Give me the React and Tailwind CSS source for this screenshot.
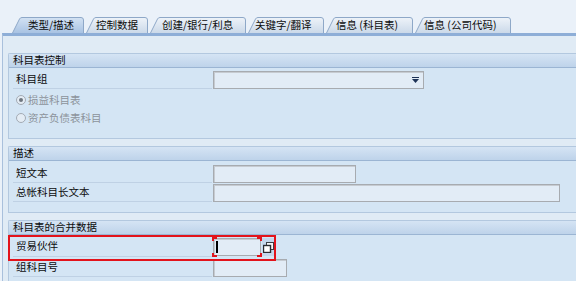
import React from "react";

const tabs = [
  { label: "类型/描述", w: 72, cls: "w-[72px]", pl: "pl-[16px]", active: true },
  { label: "控制数据", w: 62, cls: "w-[62px]", pl: "pl-[10px]" },
  { label: "创建/银行/利息", w: 96, cls: "w-[96px]", pl: "pl-[12px]" },
  { label: "关键字/翻译", w: 76, cls: "w-[76px]", pl: "pl-[7px]" },
  { label: "信息 (科目表)", w: 87, cls: "w-[87px]", pl: "pl-[10px]" },
  { label: "信息 (公司代码)", w: 96, cls: "w-[96px]", pl: "pl-[9px]" },
];

function Tab({ t, i }) {
  const w = t.w;
  const h = 16;
  const d = `M0.5,${h} L7.5,2 Q8.3,0.5 10,0.5 L${w - 3},0.5 Q${w - 0.5},0.5 ${w - 0.5},3 L${w - 0.5},${h}`;
  return (
    <div className={`relative h-[16px] shrink-0 ${t.cls}`}>
      <svg className="absolute inset-0" width={w} height={h}>
        <defs>
          <linearGradient id={`tg${i}`} x1="0" y1="0" x2="0" y2="1">
            {t.active ? (
              <>
                <stop offset="0" stopColor="#d3e2f3" />
                <stop offset="1" stopColor="#a9c3e3" />
              </>
            ) : (
              <>
                <stop offset="0" stopColor="#eef3f9" />
                <stop offset="1" stopColor="#cbd9e9" />
              </>
            )}
          </linearGradient>
        </defs>
        <path d={d} fill={`url(#tg${i})`} stroke="#8ea8c8" strokeWidth="1" />
      </svg>
      <div className={`relative h-full flex items-center pt-[1px] ${t.pl} text-[10.5px] text-[#0c0c0c] whitespace-nowrap`}>
        {t.label}
      </div>
    </div>
  );
}

function Input({ cls }) {
  return (
    <div
      className={`h-[18px] bg-[#e2ecf6] border border-[#a7abb0] shadow-[inset_1px_1px_0_#c6cbd1] ${cls}`}
    />
  );
}

function Row({ label, children, h = "h-[19px]" }) {
  return (
    <div className={`flex items-stretch ${h}`}>
      <div className="w-[199px] ml-[4px] flex items-center border-b border-[#bfd1e4] pl-[3px] text-[10.5px] text-[#0c0c0c] whitespace-nowrap">
        {label}
      </div>
      <div className="ml-[1px] flex items-center">{children}</div>
    </div>
  );
}

function Group({ title, children, bodyCls, className = "" }) {
  return (
    <div className={`relative border-t border-l border-b border-[#b3c8df] rounded-tl-[2px] ${className}`}>
      <div className="h-[14px] bg-linear-to-b from-[#d5e4f4] to-[#bed3ea] border-b border-[#9bb5d3] pl-[4px] flex items-center text-[10.5px] text-[#0c0c0c] whitespace-nowrap">
        {title}
      </div>
      <div className={`bg-[#d4e5f4] ${bodyCls}`}>{children}</div>
    </div>
  );
}

function Radio({ label, checked }) {
  return (
    <div className="flex items-center h-[18px] pl-[7px] gap-[2px]">
      <div className="w-[10px] h-[10px] rounded-full border border-[#a3abb4] bg-[#e4ecf4] flex items-center justify-center">
        {checked && <div className="w-[4px] h-[4px] rounded-full bg-[#6e767f]" />}
      </div>
      <span className="text-[10.5px] text-[#8c939b] whitespace-nowrap">{label}</span>
    </div>
  );
}

export default function App() {
  return (
    <div className="w-[576px] h-[281px] overflow-hidden bg-[#eaf1f9] font-['Noto_Sans_CJK_SC','Liberation_Sans',sans-serif] leading-none">
      <div className="pt-[17px] pl-[12px] flex gap-[2px]">
        {tabs.map((t, i) => (
          <Tab key={i} t={t} i={i} />
        ))}
      </div>
      <div className="ml-[2px] h-[300px] border-t-[3px] border-t-[#8eaed7] border-l border-l-[#a9c0dc] bg-[#e0ebf5] pt-[17px] pl-[5px]">
        <Group title="科目表控制" bodyCls="h-[70px] pt-[2px]">
          <Row label="科目组">
            <div className="relative h-[18px] w-[211px] bg-[#e2ecf6] border border-[#a7abb0] shadow-[inset_1px_1px_0_#c6cbd1] flex items-center justify-end pr-[4px]">
              <svg width="7" height="6" viewBox="0 0 7 6">
                <rect x="0" y="0" width="7" height="1" fill="#1d3357" />
                <path d="M0,2 L7,2 L3.5,6 Z" fill="#1d3357" />
              </svg>
            </div>
          </Row>
          <div className="mt-[2px]">
            <Radio label="损益科目表" checked />
            <Radio label="资产负债表科目" />
          </div>
        </Group>

        <Group title="描述" className="mt-[7px]" bodyCls="h-[51px] pt-[3px]">
          <Row label="短文本">
            <Input cls="w-[143px]" />
          </Row>
          <Row label="总帐科目长文本">
            <Input cls="w-[347px]" />
          </Row>
        </Group>

        <Group title="科目表的合并数据" className="mt-[7px]" bodyCls="h-[60px] pt-[2px]">
          <Row label="贸易伙伴" h="h-[20px]">
            <div className="relative">
              <div className="h-[18px] w-[48px] bg-[#e2ecf6] border border-[#a7abb0] shadow-[inset_1px_1px_0_#c6cbd1]" />
              <div className="absolute left-[3px] top-[3px] w-[2px] h-[12px] bg-black" />
              <span className="absolute -left-[1px] -top-[1px] w-[5px] h-[4px] border-l-2 border-t-2 border-[#e0141c]" />
              <span className="absolute -right-[1px] -top-[1px] w-[5px] h-[4px] border-r-2 border-t-2 border-[#e0141c]" />
              <span className="absolute -left-[1px] -bottom-[1px] w-[5px] h-[4px] border-l-2 border-b-2 border-[#e0141c]" />
              <span className="absolute -right-[1px] -bottom-[1px] w-[5px] h-[4px] border-r-2 border-b-2 border-[#e0141c]" />
            </div>
            <div className="ml-[1px] w-[13px] h-[18px] bg-[#c4d6eb] flex items-center justify-center">
              <svg width="11" height="11" viewBox="0 0 11 11">
                <rect x="3.5" y="0.5" width="7" height="7" fill="#f4f6f8" stroke="#3c3f44" strokeWidth="1" />
                <rect x="0.5" y="3.5" width="7" height="7" fill="#ffffff" stroke="#2a2c30" strokeWidth="1.4" />
              </svg>
            </div>
          </Row>
          <div className="mt-[1px]">
            <Row label="组科目号">
              <Input cls="w-[74px]" />
            </Row>
          </div>
          <div className="absolute left-[-1px] top-[14px] w-[268px] h-[26px] border-2 border-[#e3131b]" />
        </Group>
      </div>
    </div>
  );
}
